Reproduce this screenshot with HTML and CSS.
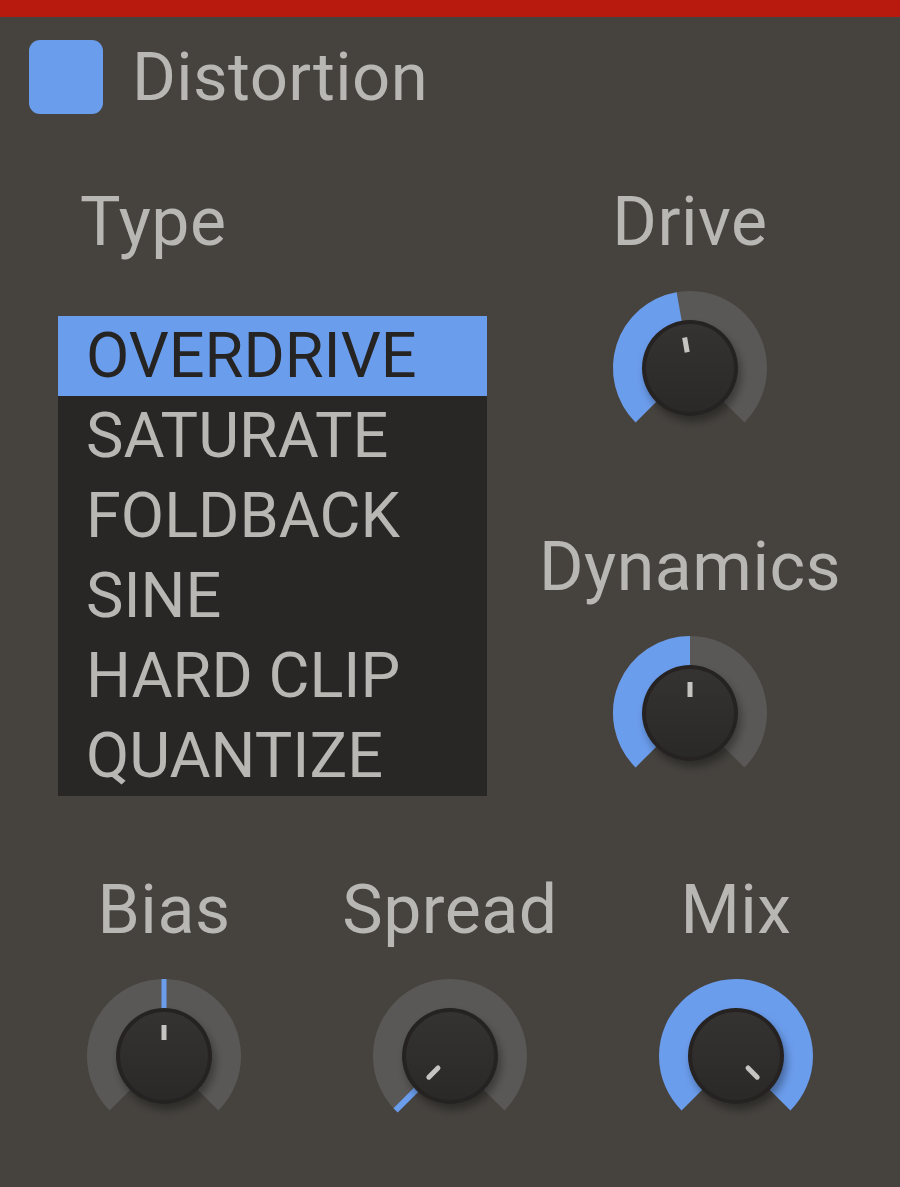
FILE: index.html
```html
<!DOCTYPE html>
<html>
<head>
<meta charset="utf-8">
<link rel="stylesheet" href="styles.css">
</head>
<body>
<svg class="defs" width="0" height="0" aria-hidden="true">
  <defs>
    <filter id="ksh" x="-30%" y="-30%" width="160%" height="160%">
      <feDropShadow dx="3" dy="6" stdDeviation="4" flood-color="#000" flood-opacity="0.35"/>
    </filter>
    <linearGradient id="kface" x1="0" y1="0" x2="0" y2="1">
      <stop offset="0" stop-color="#353332"/>
      <stop offset="1" stop-color="#2b2928"/>
    </linearGradient>
  </defs>
</svg>
<div class="topbar"></div>
<header class="head">
  <span class="toggle"></span>
  <h1 class="title">Distortion</h1>
</header>
<section class="main">
  <div class="type-col">
    <div class="label type-label">Type</div>
    <ul class="list">
      <li class="item selected">OVERDRIVE</li>
      <li class="item">SATURATE</li>
      <li class="item">FOLDBACK</li>
      <li class="item">SINE</li>
      <li class="item">HARD CLIP</li>
      <li class="item">QUANTIZE</li>
    </ul>
  </div>
  <div class="knob-col">
    <div class="knob-unit">
      <div class="label">Drive</div>
      <svg class="knob" width="170" height="170" viewBox="0 0 170 170">
        <path class="track" d="M41.16 128.84 A62 62 0 1 1 128.84 128.84"/>
        <path class="value" d="M41.16 128.84 A62 62 0 0 1 74.23 23.94"/>
        <g filter="url(#ksh)"><circle class="rim" cx="85" cy="85" r="48"/></g>
        <circle class="face" cx="85" cy="85" r="44"/>
        <line class="ind" x1="82.22" y1="69.24" x2="79.62" y2="54.47"/>
      </svg>
    </div>
    <div class="knob-unit">
      <div class="label">Dynamics</div>
      <svg class="knob" width="170" height="170" viewBox="0 0 170 170">
        <path class="track" d="M41.16 128.84 A62 62 0 1 1 128.84 128.84"/>
        <path class="value" d="M41.16 128.84 A62 62 0 0 1 85 23"/>
        <g filter="url(#ksh)"><circle class="rim" cx="85" cy="85" r="48"/></g>
        <circle class="face" cx="85" cy="85" r="44"/>
        <line class="ind" x1="85" y1="69" x2="85" y2="54"/>
      </svg>
    </div>
  </div>
</section>
<section class="bottom">
  <div class="knob-unit">
    <div class="label">Bias</div>
    <svg class="knob" width="170" height="170" viewBox="0 0 170 170">
      <path class="track" d="M41.16 128.84 A62 62 0 1 1 128.84 128.84"/>
      <line class="value-thin" x1="85" y1="8" x2="85" y2="38"/>
      <g filter="url(#ksh)"><circle class="rim" cx="85" cy="85" r="48"/></g>
      <circle class="face" cx="85" cy="85" r="44"/>
      <line class="ind" x1="85" y1="69" x2="85" y2="54"/>
    </svg>
  </div>
  <div class="knob-unit">
    <div class="label">Spread</div>
    <svg class="knob" width="170" height="170" viewBox="0 0 170 170">
      <path class="track" d="M41.16 128.84 A62 62 0 1 1 128.84 128.84"/>
      <line class="value-thin spread" x1="51.06" y1="118.94" x2="30.55" y2="139.45"/>
      <g filter="url(#ksh)"><circle class="rim" cx="85" cy="85" r="48"/></g>
      <circle class="face" cx="85" cy="85" r="44"/>
      <line class="ind round" x1="72.98" y1="97.02" x2="63.79" y2="106.21"/>
    </svg>
  </div>
  <div class="knob-unit">
    <div class="label">Mix</div>
    <svg class="knob" width="170" height="170" viewBox="0 0 170 170">
      <path class="value" d="M41.16 128.84 A62 62 0 1 1 128.84 128.84"/>
      <g filter="url(#ksh)"><circle class="rim" cx="85" cy="85" r="48"/></g>
      <circle class="face" cx="85" cy="85" r="44"/>
      <line class="ind round" x1="97.02" y1="97.02" x2="106.21" y2="106.21"/>
    </svg>
  </div>
</section>
</body>
</html>
```
FILE: styles.css
```css
* { box-sizing: border-box; }
html, body {
  margin: 0;
  padding: 0;
}
body {
  width: 900px;
  height: 1187px;
  overflow: hidden;
  background: #46433f;
  font-family: Roboto, "Liberation Sans", sans-serif;
  color: #b9b7b4;
}
.defs { position: absolute; width: 0; height: 0; }
.topbar {
  height: 17px;
  background: #b91a0e;
}
.head {
  display: flex;
  align-items: center;
  height: 74px;
  margin-top: 23px;
  padding-left: 29px;
  gap: 29px;
}
.toggle {
  width: 74px;
  height: 74px;
  border-radius: 11px;
  background: #6b9ded;
  flex: none;
}
.title {
  margin: 0;
  font-size: 67px;
  font-weight: 400;
  line-height: 74px;
  letter-spacing: 0.4px;
}
.label {
  font-size: 68px;
  line-height: 68px;
  height: 68px;
  letter-spacing: 0.5px;
  white-space: nowrap;
}
.main {
  display: flex;
  padding-left: 58px;
  gap: 53px;
  margin-top: 74px;
}
.type-col {
  width: 429px;
  display: flex;
  flex-direction: column;
}
.type-label {
  padding-left: 22px;
}
.list {
  list-style: none;
  margin: 60px 0 0 0;
  padding: 0;
  background: #292726;
}
.item {
  height: 80px;
  line-height: 80px;
  font-size: 63px;
  padding-left: 28px;
  white-space: nowrap;
}
.item.selected {
  background: #6b9ded;
  color: #262423;
}
.knob-col {
  width: 300px;
  display: flex;
  flex-direction: column;
  gap: 80px;
}
.knob-unit {
  display: flex;
  flex-direction: column;
  align-items: center;
}
.knob {
  display: block;
  margin-top: 27px;
}
.track {
  fill: none;
  stroke: #5a5856;
  stroke-width: 30;
}
.value {
  fill: none;
  stroke: #6b9ded;
  stroke-width: 30;
}
.value-thin {
  stroke: #6b9ded;
  stroke-width: 5;
}
.value-thin.spread { stroke-width: 6; }
.rim { fill: #252322; }
.face { fill: url(#kface); }
.ind {
  stroke: #c6c4c1;
  stroke-width: 5;
}
.ind.round { stroke-linecap: round; }
.bottom {
  display: grid;
  grid-template-columns: repeat(3, 286px);
  padding-left: 21px;
  margin-top: 78px;
}
```
